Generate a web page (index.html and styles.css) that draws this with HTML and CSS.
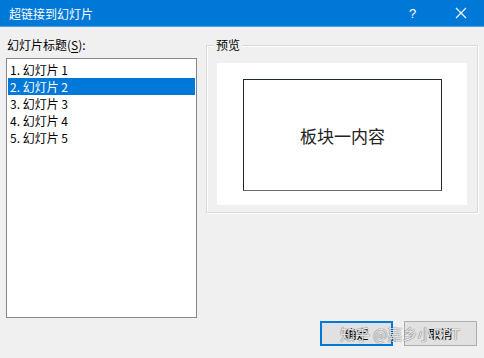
FILE: index.html
```html
<!DOCTYPE html>
<html lang="zh-CN">
  <head>
    <meta charset="UTF-8" />
    <title>超链接到幻灯片</title>
    <link rel="stylesheet" href="styles.css">
  </head>
  <body>
    <div class="dialog">
      <div class="titlebar">
        <span class="title">超链接到幻灯片</span>
        <span class="help">?</span>
        <span class="close">
          <svg width="12" height="12" viewBox="0 0 12 12">
            <path d="M1 1 L11 11 M11 1 L1 11" stroke="#fff" stroke-width="1.2" fill="none" />
          </svg>
        </span>
      </div>

      <div class="main">
        <div class="left">
          <div class="label">幻灯片标题(<u>S</u>):</div>
          <ul class="list">
            <li>1. 幻灯片 1</li>
            <li class="selected">2. 幻灯片 2</li>
            <li>3. 幻灯片 3</li>
            <li>4. 幻灯片 4</li>
            <li>5. 幻灯片 5</li>
          </ul>
        </div>

        <div class="group">
          <span class="legend">预览</span>
          <div class="canvas">
            <div class="slide">板块一内容</div>
          </div>
        </div>
      </div>

      <div class="footer">
        <button class="btn primary">确定</button>
        <button class="btn">取消</button>
        <span class="watermark">知乎 @嘉乡小PPT</span>
      </div>
    </div>
  </body>
</html>
```

FILE: styles.css
```css
body {
  margin: 0;
  font-family: "Noto Sans CJK SC", "Noto Sans", sans-serif;
  font-size: 12px;
  color: #000;
  background: #f0f0f0;
}

.dialog {
  width: 484px;
  height: 358px;
  background: #f0f0f0;
  position: relative;
}

.titlebar {
  height: 27px;
  background: #0078d7;
  color: #fff;
  display: flex;
  align-items: center;
  border-bottom: 1px solid #4a9ee3;
  box-sizing: border-box;
}

.title {
  margin-left: 9px;
  flex: 1;
  font-size: 12px;
}

.help {
  width: 12px;
  margin-right: 34px;
  font-family: "Liberation Sans", sans-serif;
  font-size: 13px;
}

.close {
  display: flex;
  margin-right: 17px;
}

.main {
  display: flex;
  padding: 10px 6px 0 6px;
  gap: 9px;
}

.left {
  width: 191px;
}

.label {
  height: 21px;
  line-height: 16px;
  padding-left: 1px;
}

.label u {
  text-underline-offset: 2px;
}

.list {
  list-style: none;
  margin: 0;
  padding: 2px 1px;
  height: 260px;
  box-sizing: border-box;
  background: #fff;
  border: 1px solid #828790;
}

.list li {
  height: 17px;
  line-height: 17px;
  padding-left: 2px;
  font-size: 12px;
}

.list li.selected {
  background: #0078d7;
  color: #fff;
}

.group {
  position: relative;
  margin-top: 8px;
  width: 272px;
  height: 168px;
  box-sizing: border-box;
  border: 1px solid #d9d9d9;
  box-shadow: inset 1px 1px 0 #fff, 1px 1px 0 #fff;
  padding: 17px 10px 7px 10px;
}

.legend {
  position: absolute;
  top: -9px;
  left: 7px;
  padding: 0 2px;
  background: #f0f0f0;
  line-height: 16px;
}

.canvas {
  width: 250px;
  height: 142px;
  background: #fff;
  padding: 16px 0 0 26px;
  box-sizing: border-box;
}

.slide {
  width: 199px;
  height: 112px;
  box-sizing: border-box;
  border: 1px solid #1e2a36;
  border-bottom-color: #6b6b6b;
  display: flex;
  align-items: center;
  justify-content: center;
  font-size: 17px;
  color: #222;
}

.footer {
  display: flex;
  justify-content: flex-end;
  gap: 11px;
  padding: 3px 7px 0 0;
  position: relative;
}

.btn {
  width: 73px;
  height: 25px;
  font-family: inherit;
  font-size: 12px;
  background: #e1e1e1;
  border: 1px solid #adadad;
  color: #000;
  padding: 0;
}

.btn.primary {
  border: 2px solid #0078d7;
}

.watermark {
  position: absolute;
  left: 340px;
  top: 5px;
  font-size: 15px;
  color: rgba(255, 255, 255, 0.9);
  text-shadow: 0 0 1px rgba(0, 0, 0, 0.6), 0 0 1px rgba(0, 0, 0, 0.4);
  pointer-events: none;
}
```
